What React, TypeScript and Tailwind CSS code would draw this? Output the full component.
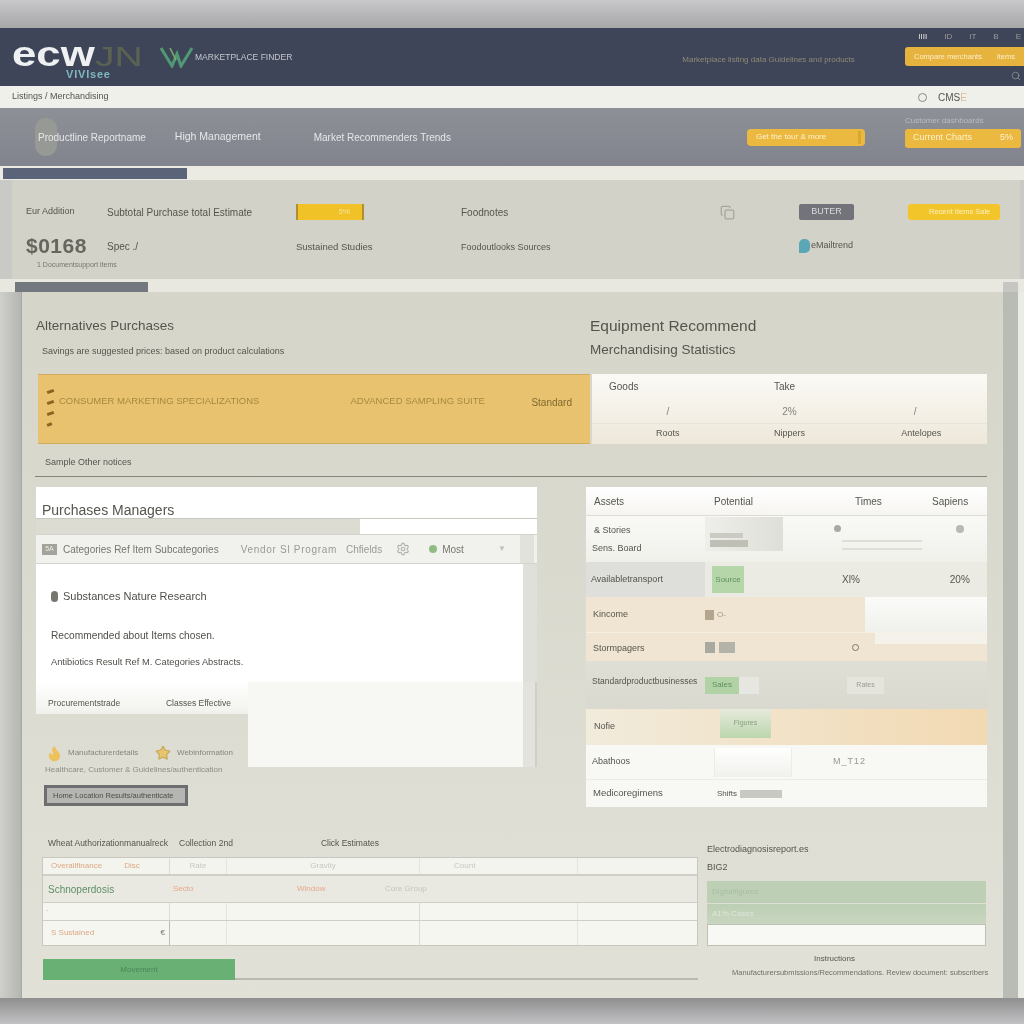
import { Search, Flame, Star, Settings, Copy } from "lucide-react";

const tabs = ["Goods", "Take", ""];

export default function App() {
  return (
    <main className="flex flex-col w-[1024px] h-[1024px] overflow-hidden bg-[#e4e4de] text-[#55554e] font-['Liberation_Sans',Arial,sans-serif] blur-[0.3px]">
      {/* top shadow band */}
      <div className="h-[28px] shrink-0 bg-gradient-to-b from-[#c8c8ca] to-[#a7a7a9]" />

      {/* Header */}
      <header className="flex h-[58px] shrink-0 bg-[#3f4559]">
        <div className="flex flex-col w-[146px] shrink-0 pl-[12px] pt-[12px]">
          <div className="flex items-baseline h-[28px] leading-[28px] whitespace-nowrap">
            <span className="inline-block w-[83px] text-[35px] font-bold text-[#eef0f2] scale-x-[1.25] origin-left">ecw</span>
            <span className="inline-block w-[48px] text-[27px] text-[#5c6252] scale-x-[1.45] origin-left">JN</span>
          </div>
          <span className="pl-[54px] text-[11px] leading-[12px] font-bold tracking-[0.8px] text-[#7fb9c0] whitespace-nowrap">VIVIsee</span>
        </div>
        <div className="flex items-center h-[58px] gap-[1px] ml-[14px] shrink-0">
          <svg width="34" height="22" viewBox="0 0 34 22" fill="none">
            <path d="M1 2 L12 20 L17 8 L21 20 L32 2" stroke="#4f9a74" strokeWidth="3" />
            <path d="M10 2 L16 14" stroke="#7fae6a" strokeWidth="1.5" />
          </svg>
          <span className="text-[8.5px] text-[#c4c8cc] whitespace-nowrap">MARKETPLACE FINDER</span>
        </div>
        <span className="ml-[390px] mt-[26px] w-[190px] shrink-0 overflow-hidden text-[8px] leading-[12px] text-[#8d8a72] whitespace-nowrap">Marketplace listing data Guidelines and products</span>
        <div className="flex flex-col items-end ml-auto w-[119px] shrink-0">
          <div className="flex items-center gap-[17px] h-[18px] pr-[3px] text-[8px] text-[#9a9c96] whitespace-nowrap">
            <span className="text-[#e8e8e0]">IIII</span>
            <span>ID</span>
            <span>IT</span>
            <span>B</span>
            <span>E</span>
          </div>
          <button className="flex items-center justify-between w-full h-[19px] mt-[1px] px-[9px] rounded-l-[3px] bg-[#e6b33e] text-[7.5px] text-[#fbeecb] whitespace-nowrap">
            <span>Compare merchants</span>
            <span>items</span>
          </button>
          <Search className="w-[10px] h-[10px] mt-[5px] mr-[3px] text-[#8b8f96]" />
        </div>
      </header>

      {/* Breadcrumb */}
      <div className="flex items-center h-[22px] shrink-0 pl-[12px] bg-[#f0f0ea] text-[10px]">
        <span className="w-[102px] whitespace-nowrap overflow-hidden text-[9px]">Listings / Merchandising</span>
        <span className="ml-[804px] w-[9px] h-[9px] rounded-full border border-[#8a8a84]" />
        <span className="ml-[11px] text-[#55554e] whitespace-nowrap">
          CMS<span className="text-[#d9bfa4]">E</span>
        </span>
      </div>

      {/* Gray nav band */}
      <div className="flex items-center h-[58px] shrink-0 bg-gradient-to-b from-[#8e9097] to-[#81848d] text-[#e6e7e8] text-[10px]">
        <div className="w-[22px] h-[38px] ml-[35px] -mr-[19px] rounded-full bg-[#979994]" />
        <span className="whitespace-nowrap">Productline Reportname</span>
        <span className="ml-[29px] text-[10.5px] whitespace-nowrap">High Management</span>
        <span className="ml-[53px] whitespace-nowrap">Market Recommenders Trends</span>
        <button className="flex items-center justify-between w-[118px] h-[17px] ml-[296px] shrink-0 pl-[9px] pr-[4px] rounded-[4px] bg-[#ebb93f] text-[8px] text-[#fdf1cf] whitespace-nowrap">
          <span>Get the tour &amp; more</span>
          <span className="w-[3px] h-[13px] bg-[#d9a92e]" />
        </button>
        <div className="flex flex-col ml-[40px] w-[116px] shrink-0 -mt-[11px]">
          <span className="text-[8px] text-[#b9bcc0] leading-[10px] whitespace-nowrap">Customer dashboards</span>
          <button className="flex items-center justify-between h-[19px] mt-[3px] px-[8px] rounded-[3px] bg-[#ebb93f] text-[9px] text-[#fdf1cf] whitespace-nowrap">
            <span>Current Charts</span>
            <span>5%</span>
          </button>
        </div>
      </div>

      {/* Tab strip */}
      <div className="h-[14px] shrink-0 pl-[3px] bg-[#ebeae3]">
        <div className="w-[184px] h-[11px] mt-[2px] bg-[#5a6378]" />
      </div>

      {/* Summary panel */}
      <div className="flex h-[99px] shrink-0 pl-[12px] pr-[4px] bg-[#c9c9c5]">
        <section className="grid flex-1 grid-cols-[81px_189px_165px_259px_79px_109px_92px] grid-rows-[22px_1fr] pl-[14px] pt-[21px] bg-[#d3d2c8] rounded-tl-[3px]">
          <span className="self-center text-[9px] whitespace-nowrap">Eur Addition</span>
          <span className="self-center text-[10px] whitespace-nowrap">Subtotal Purchase total Estimate</span>
          <div className="flex items-center">
            <span className="flex items-center justify-end w-[68px] h-[16px] pr-[12px] border-x-2 border-[#b08f2f] bg-[#f0c228] text-[8px] text-[#f7e59a]">5%</span>
          </div>
          <span className="self-center text-[10px] whitespace-nowrap">Foodnotes</span>
          <div className="flex items-center">
            <Copy className="w-[15px] h-[15px] text-[#a6a69d]" />
          </div>
          <div className="flex items-center">
            <button className="w-[55px] h-[16px] rounded-[2px] bg-[#72737b] text-[9px] text-[#d9dadb]">BUTER</button>
          </div>
          <div className="flex items-center">
            <button className="w-[92px] h-[16px] rounded-[3px] pl-[21px] bg-[#f2c62a] text-[7.5px] text-left text-[#fbf0bd] whitespace-nowrap overflow-hidden">Recent Items Sale</button>
          </div>

          <div className="flex flex-col mt-[11px]">
            <span className="text-[21px] leading-[24px] font-bold text-[#66665f] whitespace-nowrap tracking-[0.5px]">$0168</span>
            <span className="pl-[11px] mt-[2px] text-[7px] leading-[9px] text-[#77776f] whitespace-nowrap">1 Documentsupport items</span>
          </div>
          <span className="mt-[18px] text-[10px] leading-[12px] whitespace-nowrap">Spec ./</span>
          <span className="mt-[18px] text-[9.5px] leading-[12px] whitespace-nowrap">Sustained Studies</span>
          <span className="mt-[18px] col-span-2 text-[9px] leading-[12px] whitespace-nowrap">Foodoutlooks Sources</span>
          <div className="flex items-center gap-[1px] col-start-6 mt-[16px] h-[14px]">
            <span className="w-[11px] h-[14px] rounded-[5px] rounded-bl-none bg-[#5ba7b6]" />
            <span className="text-[9px] whitespace-nowrap">eMailtrend</span>
          </div>
        </section>
      </div>

      {/* Second tab strip */}
      <div className="flex h-[13px] shrink-0 pl-[15px] pt-[3px] bg-[#e8e7e0]">
        <div className="w-[133px] h-[10px] bg-[#73787f]" />
        <div className="ml-auto w-[15px] h-[10px] mr-[6px] bg-[#c6c7c2]" />
      </div>

      {/* Body */}
      <div className="flex flex-1 min-h-0">
        <div className="w-[22px] shrink-0 bg-gradient-to-r from-[#cfd0cc] to-[#b4b6b1] border-r border-[#a6a8a3]" />

        <section className="flex flex-col w-[981px] shrink-0 bg-gradient-to-b from-[#d6d5ca] to-[#e1e1d7]">
          {/* Top titles */}
          <div className="flex h-[82px] shrink-0 pl-[14px]">
            <div className="flex flex-col w-[554px] pt-[25px]">
              <h2 className="text-[13.5px] leading-[18px] whitespace-nowrap">Alternatives Purchases</h2>
              <p className="mt-[11px] ml-[6px] text-[9px] leading-[11px] whitespace-nowrap">Savings are suggested prices: based on product calculations</p>
            </div>
            <div className="flex flex-col pt-[25px]">
              <h2 className="text-[15.5px] leading-[18px] whitespace-nowrap">Equipment Recommend</h2>
              <h3 className="mt-[6px] text-[13.5px] leading-[18px] whitespace-nowrap">Merchandising Statistics</h3>
            </div>
          </div>

          {/* Yellow bar and small table */}
          <div className="flex h-[70px] shrink-0 pl-[16px]">
            <div className="flex items-start w-[552px] pr-[18px] bg-[#e8c26f] border-y border-[#d2ad5e] text-[9.5px] text-[#a58a3f]">
              <div className="flex flex-col gap-[8px] w-[21px] pl-[9px] pt-[15px]">
                <span className="w-[7px] h-[3px] -rotate-[20deg] bg-[#8a6420]" />
                <span className="w-[7px] h-[3px] -rotate-[20deg] bg-[#8a6420]" />
                <span className="w-[7px] h-[3px] -rotate-[20deg] bg-[#8a6420]" />
                <span className="w-[5px] h-[3px] -rotate-[20deg] bg-[#8a6420]" />
              </div>
              <span className="mt-[19px] whitespace-nowrap">CONSUMER MARKETING SPECIALIZATIONS</span>
              <span className="mt-[19px] ml-[91px] whitespace-nowrap">ADVANCED SAMPLING SUITE</span>
              <span className="ml-auto mt-[20px] text-[10px] text-[#7f6a2f] whitespace-nowrap">Standard</span>
            </div>
            <div className="flex flex-col w-[395px] ml-[2px] bg-gradient-to-b from-[#fbfaf6] to-[#eee8da] text-center">
              <div className="grid grid-cols-[230px_1fr] h-[25px] items-center text-[10px] text-left">
                <span className="pl-[17px]">{tabs[0]}</span>
                <span className="-ml-[48px]">{tabs[1]}</span>
              </div>
              <div className="grid grid-cols-3 h-[24px] items-center text-[10px] text-[#85857d]">
                <span className="pl-[20px]">/</span>
                <span>2%</span>
                <span className="-ml-[12px]">/</span>
              </div>
              <div className="grid grid-cols-3 flex-1 items-center border-t border-[#e9e4d6] text-[9px]">
                <span className="pl-[20px]">Roots</span>
                <span>Nippers</span>
                <span>Antelopes</span>
              </div>
            </div>
          </div>

          <p className="h-[32px] shrink-0 ml-[23px] pt-[12px] text-[9px] leading-[12px] whitespace-nowrap">Sample Other notices</p>
          <div className="h-[1px] shrink-0 ml-[13px] w-[952px] bg-[#85857d]" />

          {/* Cards */}
          <div className="flex h-[320px] shrink-0 mt-[10px] pl-[14px]">
            <div className="flex flex-col w-[501px] shrink-0">
              <div className="flex items-end h-[32px] shrink-0 pl-[6px] bg-white border-b border-[#c8c8c1]">
                <h3 className="text-[14px] leading-[16px] whitespace-nowrap">Purchases Managers</h3>
              </div>
              <div className="flex h-[15px] shrink-0 bg-white">
                <div className="w-[324px] bg-[#dddcd3]" />
              </div>
              <div className="flex items-center h-[30px] shrink-0 pl-[6px] pr-[3px] border-y border-[#d4d4ce] bg-[#f1f1ee] text-[10px] text-[#77776f]">
                <span className="flex items-center justify-center w-[15px] h-[11px] bg-[#a3a39c] text-[7px] text-[#eeeeea]">5A</span>
                <span className="ml-[6px] whitespace-nowrap">Categories Ref Item Subcategories</span>
                <span className="ml-[22px] tracking-[0.7px] text-[#9a9a93] whitespace-nowrap">Vendor Sl Program</span>
                <span className="ml-[9px] text-[#9a9a93]">Chfields</span>
                <Settings className="w-[14px] h-[14px] ml-[14px] text-[#b3b3ab]" />
                <span className="w-[8px] h-[8px] ml-[19px] rounded-full bg-[#8fbc82]" />
                <span className="ml-[5px] whitespace-nowrap">Most</span>
                <span className="ml-auto mr-[14px] text-[8px] text-[#c0c0b8]">▼</span>
                <div className="w-[14px] h-full bg-[#e2e2dd]" />
              </div>
              <div className="flex h-[118px] shrink-0">
                <div className="flex flex-col w-[487px] bg-white pl-[15px] text-[#4f4f4a]">
                  <div className="flex items-center gap-[5px] mt-[24px] h-[16px] text-[11px]">
                    <span className="w-[7px] h-[11px] rounded-full bg-[#77776f]" />
                    <span className="whitespace-nowrap">Substances Nature Research</span>
                  </div>
                  <p className="mt-[25px] text-[10.2px] leading-[14px] whitespace-nowrap">Recommended about Items chosen.</p>
                  <p className="mt-[12px] text-[9.3px] leading-[14px] whitespace-nowrap">Antibiotics Result Ref M. Categories Abstracts.</p>
                </div>
                <div className="w-[14px] bg-[#e0e0da]" />
              </div>
              <div className="flex flex-1 min-h-0">
                <div className="flex flex-col w-[212px] shrink-0">
                  <div className="flex items-center justify-between h-[32px] shrink-0 pt-[10px] pl-[12px] pr-[17px] bg-gradient-to-b from-[#ffffff] to-[#f1f1ec] text-[8.5px]">
                    <span className="whitespace-nowrap">Procurementstrade</span>
                    <span className="whitespace-nowrap">Classes Effective</span>
                  </div>
                  <div className="flex items-center h-[20px] mt-[29px] pl-[10px] text-[8px] text-[#85857d]">
                    <Flame className="w-[17px] h-[19px] fill-[#edc15c] text-[#edc15c]" />
                    <span className="ml-[5px] w-[70px] overflow-hidden whitespace-nowrap">Manufacturerdetails</span>
                    <Star className="w-[16px] h-[16px] ml-[17px] fill-[#e6c56e] text-[#c9ae62]" />
                    <span className="ml-[6px] whitespace-nowrap">Webinformation</span>
                  </div>
                  <p className="mt-[1px] pl-[9px] text-[8px] leading-[12px] text-[#8d8d85] whitespace-nowrap">Healthcare, Customer &amp; Guidelines/authentication</p>
                  <button className="flex items-center w-[144px] h-[21px] ml-[8px] mt-[9px] pl-[6px] border-[3px] border-[#6c6e6f] bg-[#b5b6b2] text-[7.5px] text-[#4c4c48] whitespace-nowrap overflow-hidden">
                    Home Location Results/authenticate
                  </button>
                </div>
                <div className="w-[275px] h-[85px] bg-[#f7f7f3]" />
                <div className="flex justify-end w-[14px] h-[85px] border-r-2 border-[#cfcfc8] bg-[#e3e3dd]" />
              </div>
            </div>

            {/* Right table */}
            <div className="flex flex-col w-[401px] ml-[49px] shrink-0 text-[10px]">
              <div className="grid grid-cols-[119px_147px_85px_50px] items-center h-[29px] shrink-0 pl-[8px] bg-gradient-to-b from-white to-[#f6f5f1] border-b border-[#dcdcd5] text-[#56564f]">
                <span>Assets</span>
                <span className="pl-[1px]">Potential</span>
                <span className="-ml-[5px]">Times</span>
                <span className="-ml-[13px]">Sapiens</span>
              </div>
              <div className="flex h-[46px] shrink-0 bg-gradient-to-b from-[#f9f9f6] to-[#f0f0eb]">
                <div className="flex flex-col justify-center gap-[7px] w-[119px] pl-[6px] text-[9px] leading-[11px]">
                  <span className="pl-[2px]">&amp; Stories</span>
                  <span>Sens. Board</span>
                </div>
                <div className="flex flex-col justify-end gap-[2px] w-[78px] h-[34px] pl-[5px] pb-[4px] mt-[1px] bg-gradient-to-r from-[#eeeeea] to-[#dfdfd9]">
                  <span className="w-[33px] h-[5px] bg-[#cbcbc3]" />
                  <span className="w-[38px] h-[7px] bg-[#bfbfb6]" />
                </div>
                <span className="ml-[51px] mt-[9px] w-[7px] h-[7px] rounded-full bg-[#a9a9a1]" />
                <div className="flex flex-col gap-[6px] ml-[1px] mt-[24px] w-[80px]">
                  <span className="h-[2px] bg-[#e0dfd7]" />
                  <span className="h-[2px] bg-[#e0dfd7]" />
                </div>
                <span className="ml-[34px] mt-[9px] w-[8px] h-[8px] rounded-full bg-[#b9b9b1]" />
              </div>
              <div className="flex items-center h-[35px] shrink-0 bg-[#ebebe4]">
                <div className="flex items-center w-[119px] h-full pl-[5px] bg-[#dededa] text-[9px] whitespace-nowrap overflow-hidden">Availabletransport</div>
                <span className="flex items-center justify-center w-[32px] h-[27px] ml-[7px] bg-[#b4d6a9] text-[8px] text-[#5f8f5e]">Source</span>
                <span className="ml-[98px]">Xl%</span>
                <span className="ml-[90px]">20%</span>
              </div>
              <div className="flex h-[35px] shrink-0 bg-[#f0e5d3]">
                <span className="flex items-center w-[119px] pl-[7px] text-[9px]">Kincome</span>
                <div className="flex items-center gap-[3px] w-[160px] text-[8px] text-[#9a9a8e]">
                  <span className="w-[9px] h-[10px] bg-[#b4a58f]" />
                  <span>O-</span>
                </div>
                <div className="flex-1 bg-gradient-to-b from-[#fbfbf9] to-[#f0f0ec]" />
              </div>
              <div className="flex items-start h-[29px] shrink-0 border-t border-[#f6f0e4] bg-[#f0e5d3] text-[9px]">
                <span className="w-[119px] pl-[7px] mt-[9px] whitespace-nowrap">Stormpagers</span>
                <div className="flex items-center gap-[4px] w-[147px] mt-[9px]">
                  <span className="w-[10px] h-[11px] bg-[#aaa99f]" />
                  <span className="w-[16px] h-[11px] bg-[#b4b3a9]" />
                </div>
                <span className="w-[7px] h-[7px] mt-[11px] rounded-full border border-[#77776f]" />
                <span className="ml-auto w-[112px] h-[11px] bg-[#f4f2ea]" />
              </div>
              <div className="flex items-center h-[48px] shrink-0 bg-gradient-to-b from-[#dfdfd6] to-[#d9d9cf] text-[8.5px]">
                <span className="w-[119px] pl-[6px] -mt-[7px] whitespace-nowrap overflow-hidden">Standardproductbusinesses</span>
                <span className="flex items-center justify-center w-[34px] h-[17px] bg-[#b1d2a5] text-[8px] text-[#5f8f5e]">Sales</span>
                <span className="w-[20px] h-[17px] bg-[#e7e7e1]" />
                <span className="flex items-center justify-center w-[37px] h-[17px] ml-[88px] bg-[#e5e5de] text-[7px] text-[#9a9a92]">Rates</span>
              </div>
              <div className="flex h-[36px] shrink-0 bg-gradient-to-r from-[#f1ebdc] to-[#f2d9b2]">
                <span className="flex items-center w-[134px] pl-[8px] text-[9px]">Nofie</span>
                <div className="flex items-center justify-center w-[51px] h-[29px] bg-gradient-to-b from-[#e6eadc] to-[#bcd6ad] text-[7px] text-[#85a27c]">Figures</div>
              </div>
              <div className="flex items-center h-[34px] shrink-0 bg-[#f8f8f5] text-[9px]">
                <span className="w-[128px] pl-[6px]">Abathoos</span>
                <span className="w-[78px] h-[29px] bg-gradient-to-b from-white to-[#f0f0ec] border-x border-[#ecece7]" />
                <span className="ml-[41px] text-[#9a9a92] tracking-[1px]">M_T12</span>
              </div>
              <div className="flex items-center flex-1 border-t border-[#ecece7] bg-[#f8f8f5] text-[9.5px]">
                <span className="w-[131px] pl-[7px] whitespace-nowrap">Medicoregimens</span>
                <span className="text-[8px]">Shifts</span>
                <span className="w-[42px] h-[8px] ml-[3px] bg-[#c9c9c3]" />
              </div>
            </div>
          </div>

          {/* Bottom section */}
          <div className="flex flex-1 min-h-0">
            <div className="flex flex-col w-[676px] shrink-0 pl-[20px]">
              <div className="flex h-[50px] shrink-0 items-end pb-[8px] pl-[6px] text-[8.5px] leading-[12px]">
                <span className="whitespace-nowrap w-[130px] overflow-hidden">Wheat Authorizationmanualreck</span>
                <span className="whitespace-nowrap ml-[1px]">Collection 2nd</span>
                <span className="whitespace-nowrap ml-[88px]">Click Estimates</span>
              </div>
              <div className="flex flex-col w-[656px] h-[89px] shrink-0 border border-[#c8c8c0] text-[8px]">
                <div className="grid grid-cols-[127px_57px_193px_158px_1fr] items-center h-[18px] bg-[#f4f4ef] border-b-2 border-[#cfcfc7] text-[#c8c8be]">
                  <div className="flex h-full items-center border-r border-[#dcdcd5] pl-[8px] gap-[22px] text-[#dca780] whitespace-nowrap">
                    <span>Overallfinance</span>
                    <span>Disc</span>
                  </div>
                  <span className="flex h-full items-center justify-center border-r border-[#e5e5df]">Rate</span>
                  <span className="flex h-full items-center justify-center border-r border-[#e5e5df]">Gravity</span>
                  <span className="flex h-full items-center border-r border-[#e5e5df] pl-[34px]">Count</span>
                  <span />
                </div>
                <div className="grid grid-cols-[127px_57px_193px_158px_1fr] items-center h-[27px] bg-[#e9e9e1] border-b border-[#cfcfc7] text-[#c5c5bb]">
                  <span className="text-[10px] pl-[5px] text-[#5e8f66] whitespace-nowrap">Schnoperdosis</span>
                  <span className="pl-[3px] text-[#e5a98a]">Secto</span>
                  <span className="pl-[70px] text-[#e5a98a]">Window</span>
                  <span className="-ml-[35px]">Core Group</span>
                  <span />
                </div>
                <div className="grid grid-cols-[127px_57px_193px_158px_1fr] h-[18px] bg-[#f6f6f1] border-b border-[#cfcfc7]">
                  <span className="border-r border-[#dcdcd5] pl-[3px] text-[#a9a9a0]">.</span>
                  <span className="border-r border-[#e5e5df]" />
                  <span className="border-r border-[#dcdcd5]" />
                  <span className="border-r border-[#e5e5df]" />
                  <span />
                </div>
                <div className="grid grid-cols-[127px_57px_193px_158px_1fr] flex-1 bg-[#f6f6f1]">
                  <div className="flex items-center justify-between border-r border-[#bdbdb5] pl-[8px] pr-[4px] text-[#dca780]">
                    <span className="whitespace-nowrap">S Sustained</span>
                    <span className="text-[#77776f]">€</span>
                  </div>
                  <span className="border-r border-[#e5e5df]" />
                  <span className="border-r border-[#dcdcd5]" />
                  <span className="border-r border-[#e5e5df]" />
                  <span />
                </div>
              </div>
              <div className="flex w-[655px] h-[21px] shrink-0 mt-[13px] ml-[1px] border-b-2 border-[#b9b9b0]">
                <button className="flex items-center justify-center w-[192px] h-[21px] bg-[#68b074] text-[8px] text-[#4d8658]">Movement</button>
              </div>
            </div>

            <div className="flex flex-col w-[279px] ml-[9px] shrink-0">
              <p className="mt-[36px] text-[9px] leading-[12px] whitespace-nowrap">Electrodiagnosisreport.es</p>
              <p className="mt-[6px] text-[9px] leading-[12px]">BIG2</p>
              <div className="flex items-center h-[22px] mt-[8px] pl-[5px] bg-[#bdd0b5] text-[8px] text-[#a9bea2]">Digitalfigures</div>
              <div className="flex items-center h-[20px] mt-[1px] pl-[5px] bg-gradient-to-b from-[#bccfb4] to-[#c9d6c0] text-[8px] text-[#dfe6d8]">A1% Cases</div>
              <div className="h-[22px] border border-[#bfc0b4] bg-[#f8f8f4]" />
              <p className="mt-[7px] text-center text-[8px] leading-[12px] whitespace-nowrap pr-[24px]">Instructions</p>
              <p className="mt-[2px] pl-[25px] text-[7.5px] leading-[12px] text-[#6f6f67] whitespace-nowrap">Manufacturersubmissions/Recommendations. Review document: subscribers</p>
            </div>
          </div>
        </section>

        <div className="w-[15px] shrink-0 bg-[#b9bbb5]" />
        <div className="w-[6px] shrink-0 bg-[#ecece7]" />
      </div>

      {/* bottom shadow band */}
      <div className="h-[26px] shrink-0 bg-gradient-to-b from-[#8f8f90] to-[#c2c2c4]" />
    </main>
  );
}
